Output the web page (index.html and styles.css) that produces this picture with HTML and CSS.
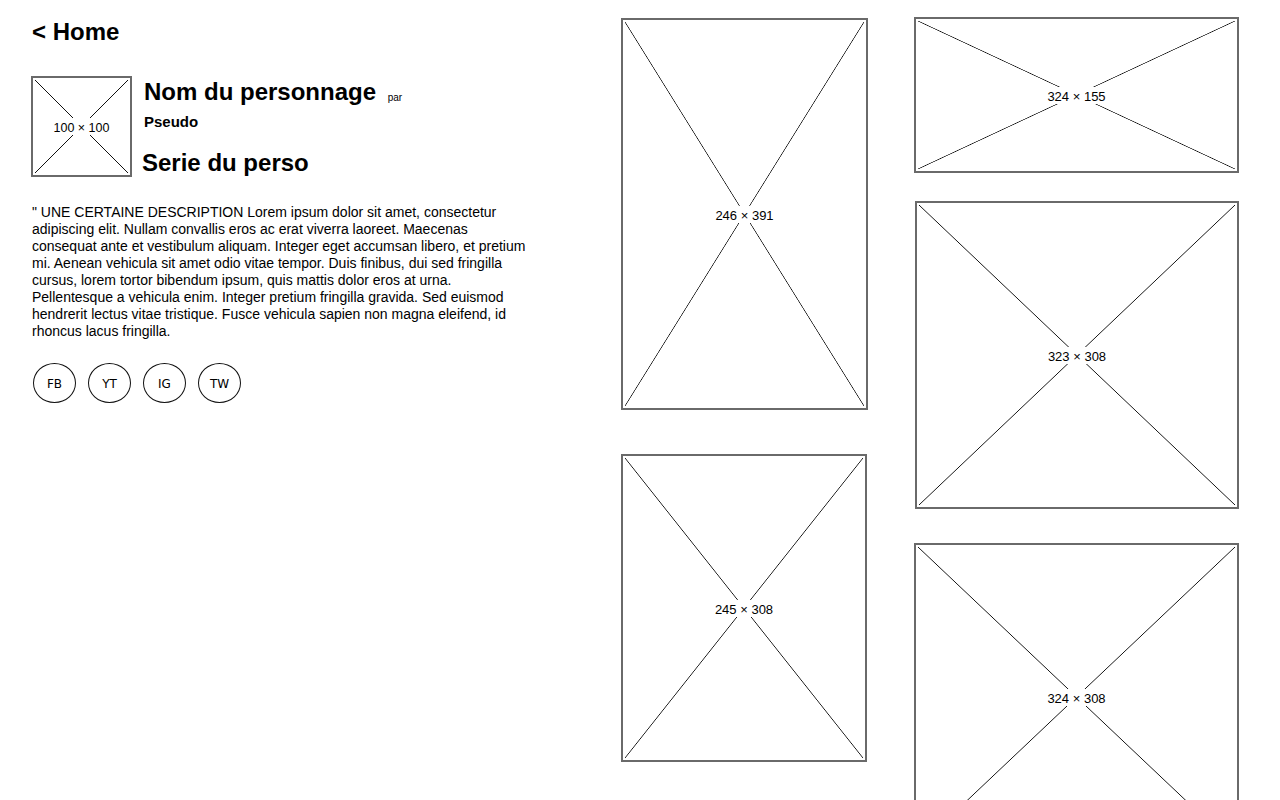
FILE: index.html
```html
<!DOCTYPE html>
<html lang="fr">
<head>
<meta charset="utf-8">
<title>Nom du personnage</title>
<link rel="stylesheet" href="styles.css">
</head>
<body>
<div class="page">
  <section class="left">
    <h1 class="home">&lt; Home</h1>
    <div class="profile">
      <div class="ph avatar"><span class="ph-label small">100 × 100</span></div>
      <div class="info">
        <h2 class="name">Nom du personnage <span class="par">par</span></h2>
        <div class="pseudo">Pseudo</div>
        <h2 class="serie">Serie du perso</h2>
      </div>
    </div>
    <p class="desc">" UNE CERTAINE DESCRIPTION Lorem ipsum dolor sit amet, consectetur adipiscing elit. Nullam convallis eros ac erat viverra laoreet. Maecenas consequat ante et vestibulum aliquam. Integer eget accumsan libero, et pretium mi. Aenean vehicula sit amet odio vitae tempor. Duis finibus, dui sed fringilla cursus, lorem tortor bibendum ipsum, quis mattis dolor eros at urna. Pellentesque a vehicula enim. Integer pretium fringilla gravida. Sed euismod hendrerit lectus vitae tristique. Fusce vehicula sapien non magna eleifend, id rhoncus lacus fringilla.</p>
    <div class="socials">
      <span class="social">FB</span>
      <span class="social">YT</span>
      <span class="social">IG</span>
      <span class="social">TW</span>
    </div>
  </section>
  <section class="col col1">
    <div class="ph p246x391"><span class="ph-label">246 × 391</span></div>
    <div class="ph p245x308"><span class="ph-label">245 × 308</span></div>
  </section>
  <section class="col col2">
    <div class="ph p324x155"><span class="ph-label">324 × 155</span></div>
    <div class="ph p323x308"><span class="ph-label">323 × 308</span></div>
    <div class="ph p324x308 extra"><span class="ph-label">324 × 308</span></div>
  </section>
</div>
</body>
</html>
```

FILE: styles.css
```css
html, body {
  margin: 0;
  padding: 0;
  background: #fff;
  color: #000;
  font-family: "Liberation Sans", Arial, sans-serif;
  overflow: hidden;
  height: 800px;
}

.page {
  display: flex;
  align-items: flex-start;
}

.left {
  width: 557px;
  padding: 18px 0 0 32px;
  flex: none;
}

.home {
  margin: 0;
  font-size: 24px;
  line-height: 28px;
  font-weight: bold;
}

.profile {
  display: flex;
  align-items: flex-start;
  margin-top: 30px;
}

.avatar {
  margin-left: -1px;
}

.info {
  margin-left: 12px;
  padding-top: 2px;
}

.name, .serie {
  margin: 0;
  font-size: 24px;
  line-height: 28px;
  font-weight: bold;
}

.par {
  font-size: 10px;
  font-weight: normal;
  margin-left: 5px;
  position: relative;
  top: 1px;
}

.pseudo {
  margin-top: 2px;
  font-size: 15px;
  line-height: 18px;
  font-weight: bold;
}

.serie {
  margin-top: 18px;
  margin-left: -2px;
}

.desc {
  margin: 27px 0 0 0;
  width: 503px;
  font-size: 14px;
  line-height: 17px;
}

.socials {
  display: flex;
  gap: 12px;
  margin: 23px 0 0 1px;
}

.social {
  width: 43px;
  height: 40px;
  box-sizing: border-box;
  border: 1.5px solid #111;
  border-radius: 50%;
  display: flex;
  align-items: center;
  justify-content: center;
  font-family: "DejaVu Sans", sans-serif;
  font-size: 12px;
  padding-top: 2px;
}

/* placeholder images */
.ph {
  box-sizing: border-box;
  border: 2px solid #6a6a6a;
  padding: 2px;
  display: flex;
  align-items: center;
  justify-content: center;
  background-color: #fff;
  background-image:
    linear-gradient(to top right, transparent calc(50% - 0.7px), #111 50%, transparent calc(50% + 0.7px)),
    linear-gradient(to bottom right, transparent calc(50% - 0.7px), #111 50%, transparent calc(50% + 0.7px));
  background-origin: content-box;
  background-clip: content-box;
  flex: none;
}

.ph-label {
  background: #fff;
  font-size: 13px;
  line-height: 14px;
  padding: 3px 2px 0;
}

.ph-label.small {
  font-size: 12.5px;
}

.avatar {
  width: 101px;
  height: 101px;
}

.col {
  display: flex;
  flex-direction: column;
  flex: none;
}

.col1 {
  margin-left: 32px;
  width: 247px;
  padding-top: 18px;
  gap: 44px;
}

.col2 {
  margin-left: 46px;
  width: 325px;
  padding-top: 17px;
  gap: 28px;
}

.p246x391 { width: 247px; height: 392px; }
.p245x308 { width: 246px; height: 308px; }
.p324x155 { width: 325px; height: 156px; }
.p323x308 { width: 324px; height: 308px; margin-left: 1px; }
.p324x308 { width: 325px; height: 308px; }
.extra { margin-top: 6px; }
```
